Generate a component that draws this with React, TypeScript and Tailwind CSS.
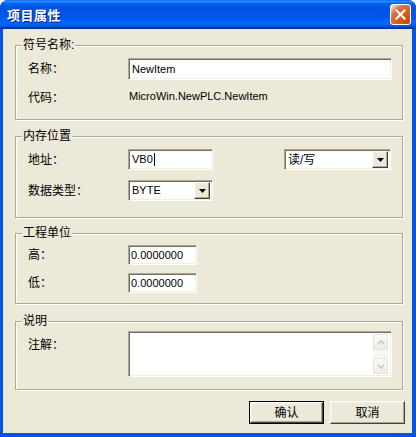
import React from "react";

const sunken =
  "border border-t-[#ACA899] border-l-[#ACA899] border-r-white border-b-white shadow-[inset_1px_1px_0_#716F64,inset_-1px_-1px_0_#F1EFE2] bg-white";
const raised =
  "border border-t-white border-l-white border-r-[#404040] border-b-[#404040] shadow-[inset_-1px_-1px_0_#ACA899,inset_1px_1px_0_#F1EFE2] bg-[#ECE9D8]";

const TitleBar: React.FC = () => (
  <div className="h-[29px] shrink-0 flex items-center justify-between pl-[7px] pr-[5px] bg-[linear-gradient(to_bottom,#0058EE_0%,#3593FF_4%,#288EFF_6%,#127DFF_8%,#036FFC_10%,#0262EE_14%,#0057E5_20%,#0054E3_24%,#0055EB_56%,#005BF5_66%,#026AFE_76%,#0062EF_86%,#0052D6_92%,#0040AB_94%,#003092_100%)]">
    <span className="text-white font-bold text-[13px] leading-[15px] tracking-[0.5px] [text-shadow:1px_1px_0_#0A1883] font-['Noto_Sans_CJK_SC',sans-serif]">
      项目属性
    </span>
    <div className="w-[21px] h-[21px] rounded-[3px] border border-white flex items-center justify-center bg-[radial-gradient(circle_at_90%_90%,#CC4600_0%,#DC6527_55%,#CD7546_70%,#FFCCAC_90%,white_100%)]">
      <svg width="11" height="11" viewBox="0 0 11 11">
        <path d="M1.5 1.5 L9.5 9.5 M9.5 1.5 L1.5 9.5" stroke="white" strokeWidth="2.2" strokeLinecap="square" />
      </svg>
    </div>
  </div>
);

const Group: React.FC<{ title: string; className: string; children: React.ReactNode }> = ({
  title,
  className,
  children,
}) => (
  <fieldset
    className={`border border-[#ACA899] shadow-[inset_1px_1px_0_#fff,1px_1px_0_#fff] mr-[1px] ${className}`}
  >
    <legend className="ml-[6px] px-[1px] h-[14px] leading-[14px] text-[12px] bg-[#ECE9D8] relative">
      {title}
    </legend>
    {children}
  </fieldset>
);

const Label: React.FC<{ text: string; className?: string }> = ({ text, className = "" }) => (
  <div className={`w-[112px] pl-[12px] shrink-0 text-[12px] leading-[14px] ${className}`}>{text}</div>
);

const Arrow: React.FC = () => (
  <div className={`${raised} w-[16px] h-[17px] flex items-center justify-center`}>
    <svg width="7" height="4" viewBox="0 0 7 4">
      <polygon points="0,0 7,0 3.5,4" fill="black" />
    </svg>
  </div>
);

const ScrollBtn: React.FC<{ up?: boolean }> = ({ up }) => (
  <div className="w-[15px] h-[16px] rounded-[2px] border border-[#E6E4DA] bg-[linear-gradient(to_bottom,#F8F8F4,#EEEDE6)] flex items-center justify-center">
    <svg width="8" height="5" viewBox="0 0 8 5">
      <path
        d={up ? "M1 4 L4 1 L7 4" : "M1 1 L4 4 L7 1"}
        stroke="#C6C4B8"
        strokeWidth="1.6"
        fill="none"
      />
    </svg>
  </div>
);

export default function App() {
  return (
    <div className="w-[416px] h-[437px] flex flex-col rounded-t-[8px] overflow-hidden bg-[#0553E3] text-black font-['Liberation_Sans','Noto_Sans_CJK_SC',sans-serif]">
      <TitleBar />
      <div className="flex-1 flex flex-col ml-[3px] mr-[4px] mb-[4px] bg-[#ECE9D8] pl-[12px] pr-[8px]">
        <Group title="符号名称:" className="mt-[9px] h-[82px]">
          <div className="pt-[6px] flex flex-col gap-[6px]">
            <div className="flex items-center">
              <Label text="名称：" />
              <div className={`${sunken} w-[264px] h-[22px] flex items-center pl-[3px] text-[11px]`}>NewItem</div>
            </div>
            <div className="flex items-center h-[20px]">
              <Label text="代码：" className="mt-[3px]" />
              <div className="pl-[1px] text-[11px]">MicroWin.NewPLC.NewItem</div>
            </div>
          </div>
        </Group>

        <Group title="内存位置" className="mt-[9px] h-[89px]">
          <div className="pt-[6px] flex flex-col gap-[10px]">
            <div className="flex items-center">
              <Label text="地址：" />
              <div className={`${sunken} w-[85px] h-[21px] flex items-center pl-[3px] text-[11px]`}>
                VB0
                <span className="w-[1px] h-[13px] bg-black ml-[1px]" />
              </div>
              <div className={`${sunken} ml-[71px] w-[107px] h-[21px] flex items-center justify-between pl-[3px] pr-[2px] text-[12px]`}>
                读/写
                <Arrow />
              </div>
            </div>
            <div className="flex items-center">
              <Label text="数据类型：" />
              <div className={`${sunken} w-[85px] h-[21px] flex items-center justify-between pl-[3px] pr-[2px] text-[11px]`}>
                BYTE
                <Arrow />
              </div>
            </div>
          </div>
        </Group>

        <Group title="工程单位" className="mt-[8px] h-[78px]">
          <div className="pt-[5px] flex flex-col gap-[8px]">
            <div className="flex items-center">
              <Label text="高：" />
              <div className={`${sunken} w-[69px] h-[20px] flex items-center pl-[2px] text-[11px]`}>0.0000000</div>
            </div>
            <div className="flex items-center">
              <Label text="低：" />
              <div className={`${sunken} w-[69px] h-[20px] flex items-center pl-[2px] text-[11px]`}>0.0000000</div>
            </div>
          </div>
        </Group>

        <Group title="说明" className="mt-[10px] h-[76px]">
          <div className="pt-[3px] flex items-start">
            <Label text="注解：" className="mt-[7px]" />
            <div className={`${sunken} w-[264px] h-[46px] flex justify-end p-[2px] pr-[3px]`}>
              <div className="w-[15px] h-full flex flex-col justify-between bg-[#F7F6F1]">
                <ScrollBtn up />
                <ScrollBtn />
              </div>
            </div>
          </div>
        </Group>

        <div className="mt-[11px] flex justify-end gap-[6px] mr-[-1px] text-[12px]">
          <div className="w-[75px] h-[23px] border border-black">
            <div className={`${raised} w-full h-full flex items-center justify-center`}>确认</div>
          </div>
          <div className={`${raised} w-[75px] h-[23px] flex items-center justify-center`}>取消</div>
        </div>
      </div>
    </div>
  );
}
